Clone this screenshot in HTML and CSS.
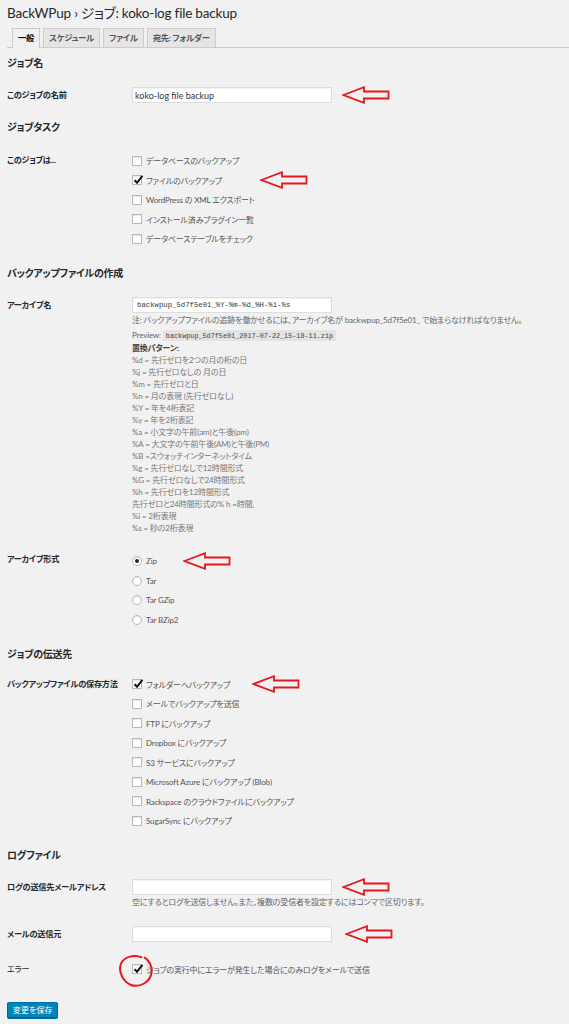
FILE: index.html
```html
<!DOCTYPE html>
<html lang="ja">
<head>
    <meta charset="UTF-8">
    <meta name="viewport" content="width=device-width, initial-scale=1.0">
    <title>BackWPup - ジョブ: koko-log file backup</title>
    <link rel="stylesheet" href="styles.css">
</head>
<body>
    <div class="wrap">
        <h1 class="page-title">BackWPup › ジョブ: koko-log file backup</h1>

        <div class="tabs">
            <span class="tab tab-active">一般</span>
            <span class="tab">スケジュール</span>
            <span class="tab">ファイル</span>
            <span class="tab">宛先: フォルダー</span>
        </div>

        <!-- ジョブ名 -->
        <h2 class="section-title">ジョブ名</h2>
        <div class="form-table">
            <div class="row">
                <div class="row-label">このジョブの名前</div>
                <div class="field">
                    <div class="line">
                        <input class="text-input" type="text" value="koko-log file backup">
                        <svg class="arrow" viewBox="0 0 48 18"><path d="M1.5 9 L22 1.2 L22 5.5 L46.5 5.5 L46.5 12.5 L22 12.5 L22 16.8 Z"/></svg>
                    </div>
                </div>
            </div>
        </div>

        <!-- ジョブタスク -->
        <h2 class="section-title">ジョブタスク</h2>
        <div class="form-table">
            <div class="row">
                <div class="row-label row-label-list">このジョブは...</div>
                <div class="field">
                    <label class="check"><span class="box"></span>データベースのバックアップ</label>
                    <label class="check"><span class="box checked"><svg viewBox="0 0 10 10"><path d="M1.6 5.2 L4 7.8 L9.4 0.8"/></svg></span>ファイルのバックアップ<svg class="arrow arrow-gap-38" viewBox="0 0 48 18"><path d="M1.5 9 L22 1.2 L22 5.5 L46.5 5.5 L46.5 12.5 L22 12.5 L22 16.8 Z"/></svg></label>
                    <label class="check"><span class="box"></span>WordPress の XML エクスポート</label>
                    <label class="check"><span class="box"></span>インストール済みプラグイン一覧</label>
                    <label class="check"><span class="box"></span>データベーステーブルをチェック</label>
                </div>
            </div>
        </div>

        <!-- バックアップファイルの作成 -->
        <h2 class="section-title">バックアップファイルの作成</h2>
        <div class="form-table">
            <div class="row">
                <div class="row-label">アーカイブ名</div>
                <div class="field">
                    <input class="text-input mono" type="text" value="backwpup_5d7f5e01_%Y-%m-%d_%H-%i-%s">
                    <p class="description">注: バックアップファイルの追跡を働かせるには、アーカイブ名が backwpup_5d7f5e01_ で始まらなければなりません。</p>
                    <p class="description preview">Preview: <code>backwpup_5d7f5e01_2017-07-22_15-18-11.zip</code></p>
                    <p class="description patterns">
                        <strong>置換パターン:</strong><br>
                        %d = 先行ゼロを2つの月の桁の日<br>
                        %j = 先行ゼロなしの 月の日<br>
                        %m = 先行ゼロと日<br>
                        %n = 月の表現 (先行ゼロなし)<br>
                        %Y = 年を4桁表記<br>
                        %y = 年を2桁表記<br>
                        %a = 小文字の午前(am)と午後(pm)<br>
                        %A = 大文字の午前午後(AM)と午後(PM)<br>
                        %B =スウォッチインターネットタイム<br>
                        %g = 先行ゼロなしで12時間形式<br>
                        %G = 先行ゼロなしで24時間形式<br>
                        %h = 先行ゼロを12時間形式<br>
                        先行ゼロと24時間形式の% h =時間,<br>
                        %i = 2桁表現<br>
                        %s = 秒の2桁表現
                    </p>
                </div>
            </div>
            <div class="row">
                <div class="row-label row-label-radio">アーカイブ形式</div>
                <div class="field">
                    <label class="check"><span class="radio checked"></span>Zip<svg class="arrow arrow-gap-26" viewBox="0 0 48 18"><path d="M1.5 9 L22 1.2 L22 5.5 L46.5 5.5 L46.5 12.5 L22 12.5 L22 16.8 Z"/></svg></label>
                    <label class="check"><span class="radio"></span>Tar</label>
                    <label class="check"><span class="radio"></span>Tar GZip</label>
                    <label class="check"><span class="radio"></span>Tar BZip2</label>
                </div>
            </div>
        </div>

        <!-- ジョブの伝送先 -->
        <h2 class="section-title">ジョブの伝送先</h2>
        <div class="form-table form-table-tight">
            <div class="row">
                <div class="row-label row-label-list">バックアップファイルの保存方法</div>
                <div class="field">
                    <label class="check"><span class="box checked"><svg viewBox="0 0 10 10"><path d="M1.6 5.2 L4 7.8 L9.4 0.8"/></svg></span>フォルダーへバックアップ<svg class="arrow arrow-gap-22" viewBox="0 0 48 18"><path d="M1.5 9 L22 1.2 L22 5.5 L46.5 5.5 L46.5 12.5 L22 12.5 L22 16.8 Z"/></svg></label>
                    <label class="check"><span class="box"></span>メールでバックアップを送信</label>
                    <label class="check"><span class="box"></span>FTP にバックアップ</label>
                    <label class="check"><span class="box"></span>Dropbox にバックアップ</label>
                    <label class="check"><span class="box"></span>S3 サービスにバックアップ</label>
                    <label class="check"><span class="box"></span>Microsoft Azure にバックアップ (Blob)</label>
                    <label class="check"><span class="box"></span>Rackspace のクラウドファイルにバックアップ</label>
                    <label class="check"><span class="box"></span>SugarSync にバックアップ</label>
                </div>
            </div>
        </div>

        <!-- ログファイル -->
        <h2 class="section-title">ログファイル</h2>
        <div class="form-table">
            <div class="row">
                <div class="row-label">ログの送信先メールアドレス</div>
                <div class="field">
                    <div class="line">
                        <input class="text-input" type="text" value="">
                        <svg class="arrow" viewBox="0 0 48 18"><path d="M1.5 9 L22 1.2 L22 5.5 L46.5 5.5 L46.5 12.5 L22 12.5 L22 16.8 Z"/></svg>
                    </div>
                    <p class="description">空にするとログを送信しません。また、複数の受信者を設定するにはコンマで区切ります。</p>
                </div>
            </div>
            <div class="row">
                <div class="row-label">メールの送信元</div>
                <div class="field">
                    <div class="line">
                        <input class="text-input" type="text" value="">
                        <svg class="arrow arrow-gap-13" viewBox="0 0 48 18"><path d="M1.5 9 L22 1.2 L22 5.5 L46.5 5.5 L46.5 12.5 L22 12.5 L22 16.8 Z"/></svg>
                    </div>
                </div>
            </div>
            <div class="row">
                <div class="row-label row-label-list row-label-light">エラー</div>
                <div class="field">
                    <label class="check"><span class="box checked"><svg viewBox="0 0 10 10"><path d="M1.6 5.2 L4 7.8 L9.4 0.8"/></svg><svg class="circle" viewBox="0 0 36 34"><path d="M24 3.5 C17 0.5 6 2 2.8 10 C0.5 17 4 27 13 31 C22 34 32 28 33.5 19 C34.5 12 31 6 26 3.2"/></svg></span>ジョブの実行中にエラーが発生した場合にのみログをメールで送信</label>
                </div>
            </div>
        </div>

        <button class="button-primary" type="button">変更を保存</button>
    </div>
</body>
</html>
```

FILE: styles.css
```css
* {
    margin: 0;
    padding: 0;
    box-sizing: border-box;
}

body {
    background: #f1f1f1;
    color: #555;
    font-family: "Lato", "Noto Sans CJK JP", sans-serif;
    font-size: 8px;
    letter-spacing: -0.15px;
    font-feature-settings: "palt";
}

.wrap {
    padding-left: 7px;
    padding-bottom: 7px;
}

.page-title {
    font-size: 13.5px;
    font-weight: 400;
    line-height: 20px;
    letter-spacing: -0.2px;
    padding-top: 3px;
    color: #23282d;
}

/* tabs */
.tabs {
    display: flex;
    gap: 3px;
    margin-top: 5px;
    padding-left: 5px;
    border-bottom: 1px solid #ccc;
}

.tab {
    height: 19px;
    line-height: 18px;
    padding: 0 5px;
    margin-bottom: -1px;
    border: 1px solid #ccc;
    border-bottom: 0;
    background: #e5e5e5;
    color: #555;
    font-size: 8.3px;
    font-weight: 700;
    letter-spacing: -0.25px;
}

.tab-active {
    height: 20px;
    background: #f1f1f1;
    color: #000;
}

/* sections */
.section-title {
    margin-top: 16px;
    font-size: 10px;
    font-weight: 700;
    line-height: 16px;
    letter-spacing: -0.3px;
    color: #23282d;
}

.tabs + .section-title {
    margin-top: 7px;
}

.form-table {
    display: flex;
    flex-direction: column;
    gap: 18px;
    margin-top: 16px;
}

.form-table-tight {
    margin-top: 13px;
}

.row {
    display: flex;
}

.row-label {
    width: 125px;
    flex: none;
    font-size: 8.2px;
    font-weight: 700;
    line-height: 16px;
    letter-spacing: -0.25px;
    color: #23282d;
}

.row-label-list {
    line-height: 19.5px;
}

.row-label-radio {
    line-height: 14px;
}

.row-label-light {
    font-weight: 400;
}

.field {
    flex: 1;
    min-width: 0;
}

.line {
    display: flex;
    align-items: center;
    height: 16px;
}

.text-input {
    display: block;
    width: 200px;
    height: 16px;
    padding: 0 2px;
    border: 1px solid #ddd;
    box-shadow: inset 0 1px 1px rgba(0, 0, 0, 0.05);
    background: #fff;
    color: #32373c;
    font-family: "Lato", "Noto Sans CJK JP", sans-serif;
    font-size: 9px;
    outline: none;
}

.text-input.mono {
    font-family: "Liberation Mono", monospace;
    font-size: 7.3px;
    letter-spacing: 0;
    padding-left: 4px;
}

.description {
    margin-top: 1px;
    line-height: 12px;
    color: #666;
}

.preview {
    margin-top: 3px;
}

.preview code {
    padding: 1.5px 3px;
    background: #e3e3e3;
    font-family: "Liberation Mono", monospace;
    font-size: 6.8px;
    letter-spacing: 0;
    color: #444;
}

.patterns {
    margin-top: 0;
    color: #777;
}

.patterns strong {
    color: #444;
}

/* checkboxes and radios */
.check {
    display: flex;
    align-items: center;
    height: 19.5px;
    color: #555;
}

.box,
.radio {
    position: relative;
    flex: none;
    width: 10px;
    height: 10px;
    margin-right: 4px;
    border: 1px solid #b4b9be;
    background: #fff;
    box-shadow: inset 0 1px 1px rgba(0, 0, 0, 0.1);
}

.radio {
    border-radius: 50%;
}

.radio.checked::before {
    content: "";
    position: absolute;
    left: 2px;
    top: 2px;
    width: 4px;
    height: 4px;
    border-radius: 50%;
    background: #222;
}

.box svg {
    position: absolute;
    left: 0;
    top: -1px;
    width: 10px;
    height: 10px;
    overflow: visible;
}

.box svg path {
    fill: none;
    stroke: #111;
    stroke-width: 2;
}

/* red annotations */
.arrow {
    flex: none;
    width: 48px;
    height: 18px;
    margin: -1px 0 -1px 10px;
}

.arrow path {
    fill: none;
    stroke: #e5171f;
    stroke-width: 1.8;
    stroke-linejoin: miter;
}

.arrow-gap-38 {
    margin-left: 38px;
}

.arrow-gap-26 {
    margin-left: 26px;
}

.arrow-gap-22 {
    margin-left: 22px;
}

.arrow-gap-13 {
    margin-left: 13px;
}

.box svg.circle {
    left: -15px;
    top: -11px;
    width: 36px;
    height: 34px;
}

.box svg.circle path {
    stroke: #e5171f;
    stroke-width: 2;
}

.button-primary {
    display: block;
    margin-top: 23px;
    height: 16px;
    padding: 0 5px;
    border: 1px solid #0073aa;
    border-color: #0073aa #006799 #006799;
    border-radius: 2px;
    box-shadow: 0 1px 0 #006799;
    background: #0085ba;
    color: #fff;
    font-family: "Noto Sans CJK JP", sans-serif;
    font-size: 8px;
    font-feature-settings: "palt";
    line-height: 14px;
}
```
